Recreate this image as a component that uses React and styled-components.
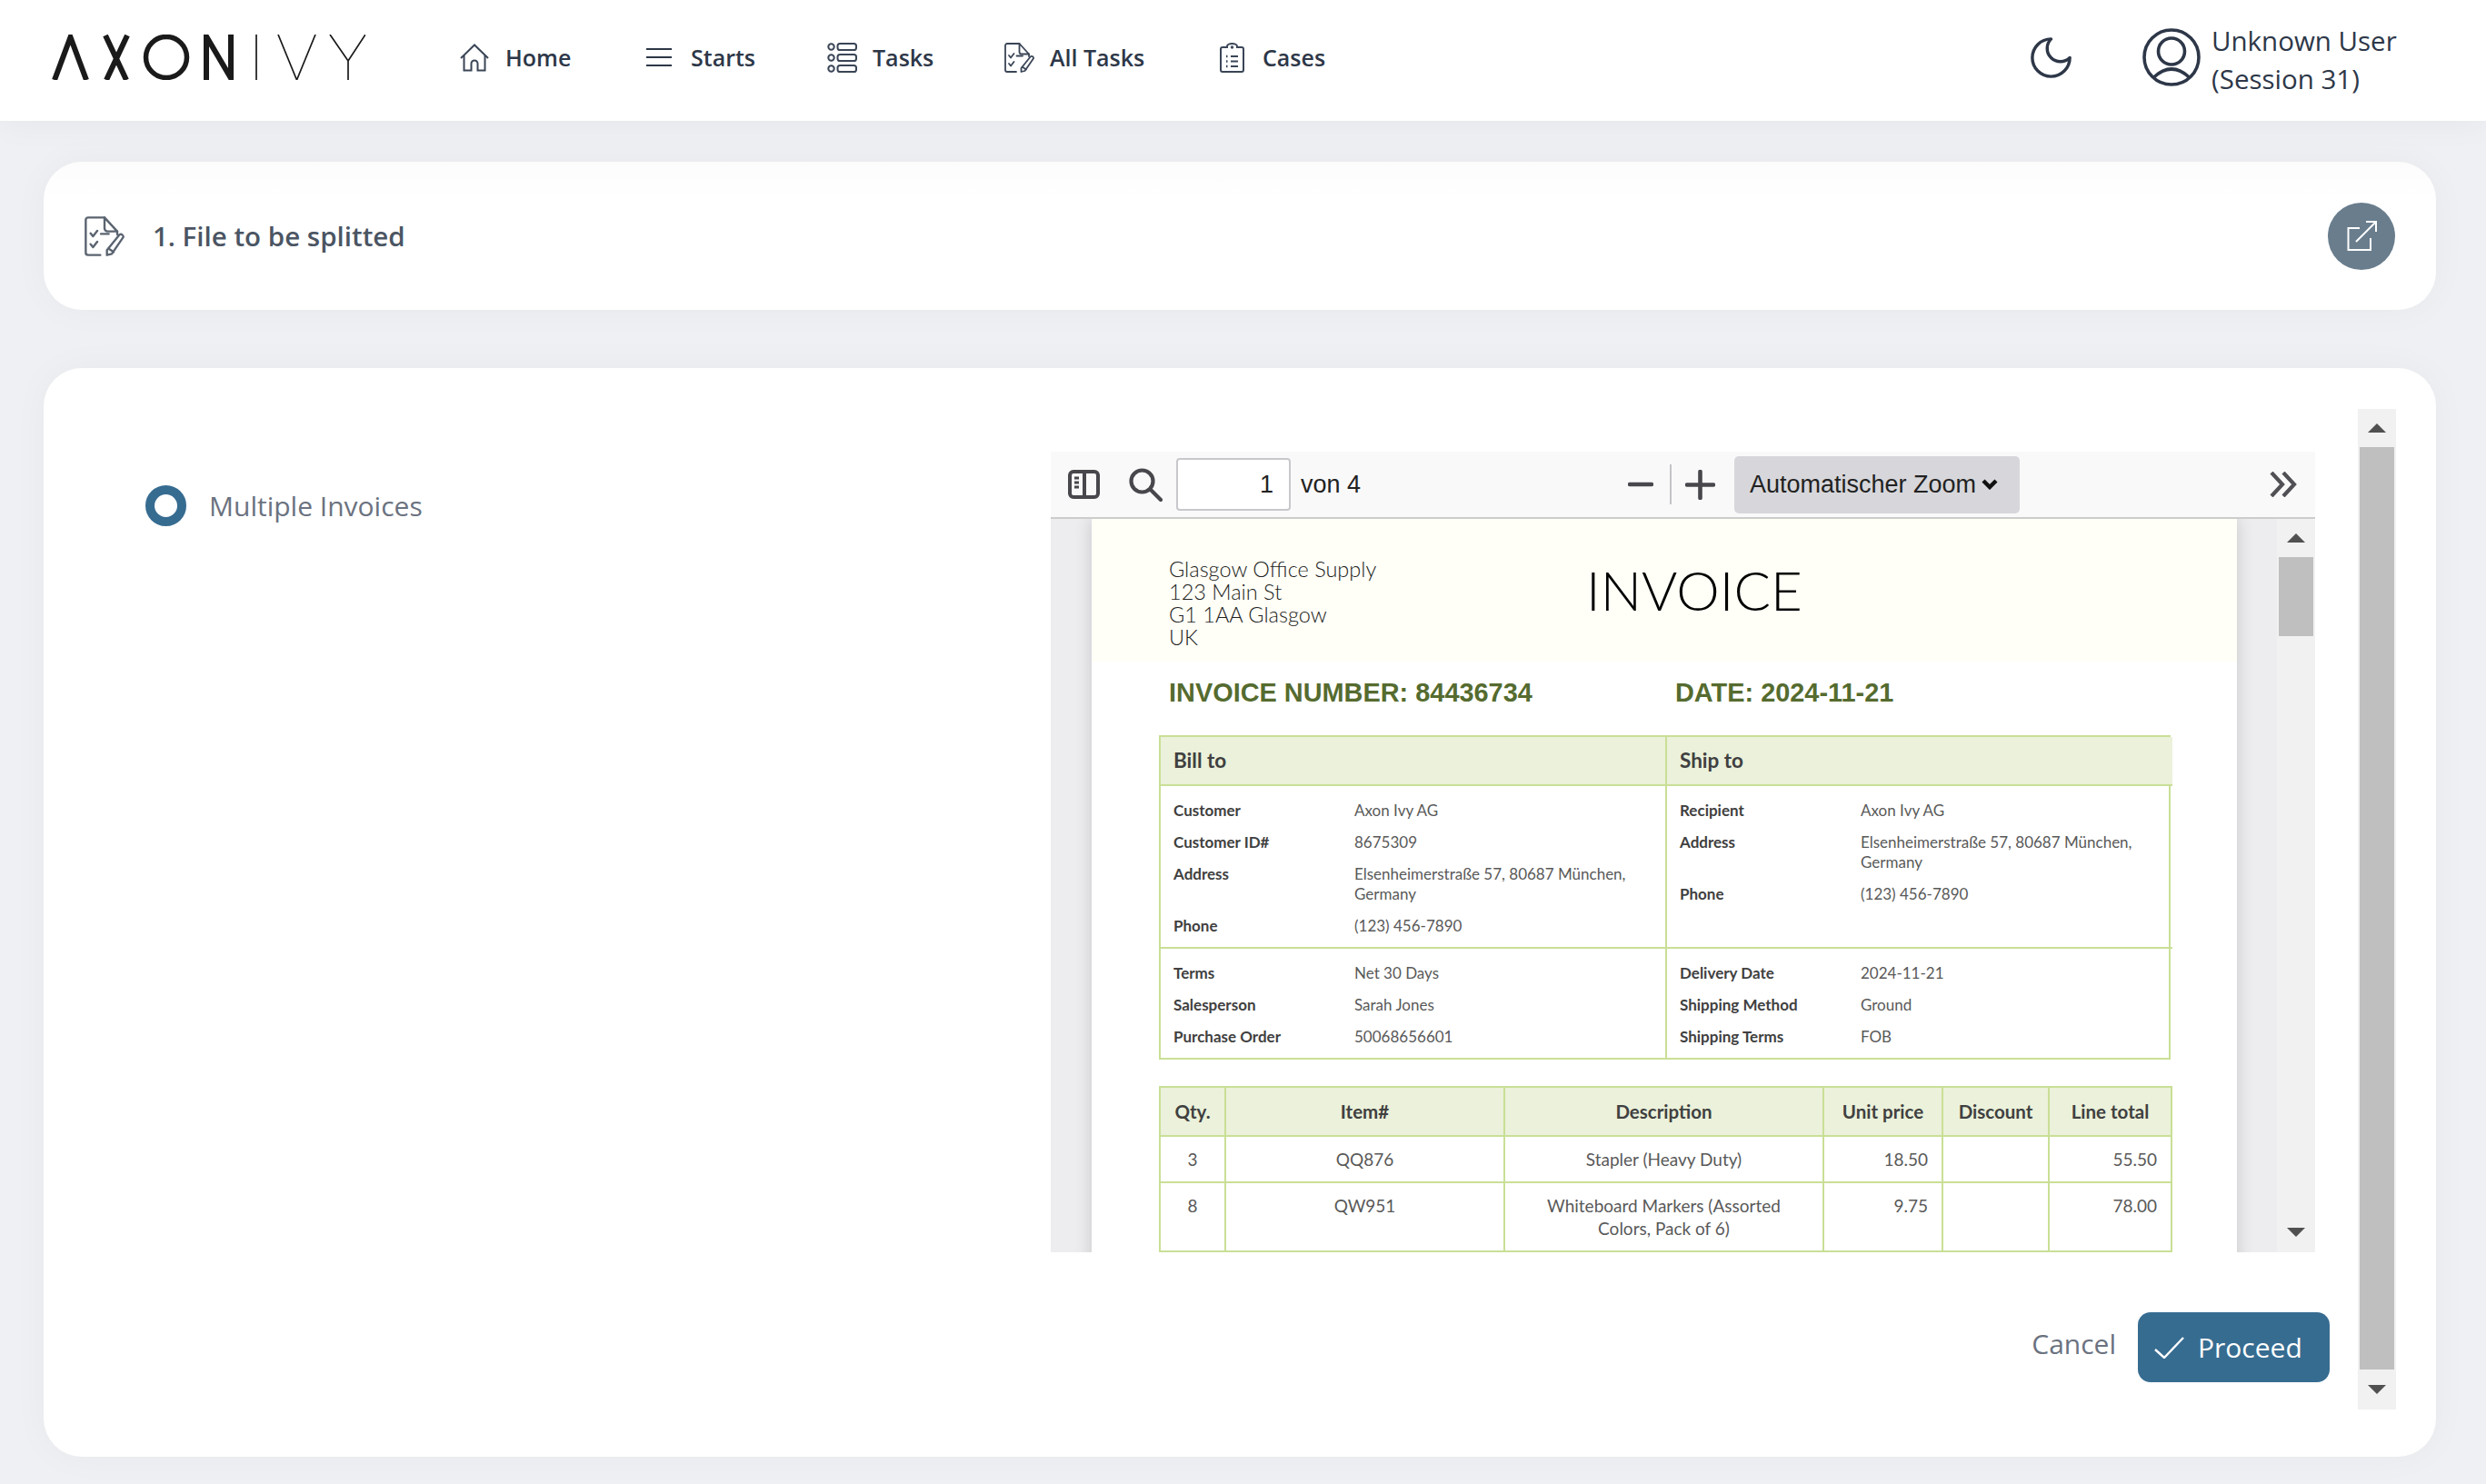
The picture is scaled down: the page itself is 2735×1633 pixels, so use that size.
import React from "react";
import styled, { createGlobalStyle } from "styled-components";

const Global = createGlobalStyle`
  html, body { margin: 0; padding: 0; background: #eff0f3; }
  body { font-family: "Open Sans", "Noto Sans", sans-serif; color: #2d3748; }
  * { box-sizing: border-box; }
`;

const Page = styled.div`
  width: 2735px;
  height: 1633px;
  overflow: hidden;
  background: #eff0f3;
`;
const Header = styled.header`
  height: 133px;
  background: #fff;
  display: flex;
  align-items: center;
  padding: 0 0 7px 57px;
  box-shadow: 0 0 38px rgba(0, 0, 0, 0.05);
  position: relative;
`;
const LogoBox = styled.svg`
  width: 345px;
  height: 50px;
  margin-right: 104px;
  flex: none;
`;
const Nav = styled.nav`
  display: flex;
  align-items: center;
`;
const NavItem = styled.a`
  display: flex;
  align-items: center;
  width: ${(p) => p.$w}px;
  font-size: 25px;
  font-weight: 600;
  color: #2d3748;
`;
const NavIcon = styled.span`
  display: flex;
  align-items: center;
  width: ${(p) => p.$w || 50}px;
  padding-left: ${(p) => p.$pad || 0}px;
  flex: none;
`;
const HeaderRight = styled.div`
  margin-left: auto;
  display: flex;
  align-items: center;
`;
const MoonWrap = styled.span`
  display: flex;
  margin-right: 73px;
`;
const UserText = styled.div`
  margin: 5px 0 0 12px;
  width: 302px;
  font-size: 29.5px;
  line-height: 42px;
  font-weight: 400;
  color: #2d3748;
`;
const Card = styled.section`
  background: #fff;
  border-radius: 42px;
  margin: 0 55px 0 48px;
  box-shadow: 0 0 42px rgba(0, 0, 0, 0.035);
`;
const TitleCard = styled(Card)`
  margin-top: 45px;
  height: 163px;
  display: flex;
  align-items: center;
  padding: 0 45px 0 45px;
  background: linear-gradient(#fcfcfc, #fff 40px);
`;
const TitleText = styled.h1`
  margin: 0 0 0 31px;
  font-size: 29.5px;
  font-weight: 600;
  color: #4b5563;
`;
const RoundBtn = styled.button`
  margin-left: auto;
  width: 74px;
  height: 74px;
  border: 0;
  border-radius: 50%;
  background: #697d8d;
  display: flex;
  align-items: center;
  justify-content: center;
  padding: 0;
`;
const MainCard = styled(Card)`
  margin-top: 64px;
  height: 1198px;
  display: flex;
  padding: 45px 44px 52px 0;
`;
const Content = styled.div`
  flex: 1;
  padding: 47px 31px 0 0;
  display: flex;
  flex-direction: column;
`;
const FormRow = styled.div`
  display: flex;
`;
const LeftCol = styled.div`
  width: 1108px;
  padding: 37px 0 0 112px;
  display: flex;
  align-items: flex-start;
  gap: 25px;
`;
const Radio = styled.span`
  width: 45px;
  height: 45px;
  border-radius: 50%;
  border: 10px solid #376c91;
  flex: none;
`;
const RadioLabel = styled.span`
  font-size: 30px;
  line-height: 45px;
  font-weight: 400;
  color: #6b7280;
`;
const Pdf = styled.div`
  width: 1391px;
  height: 881px;
  display: flex;
  flex-direction: column;
  overflow: hidden;
  background: #ededf0;
`;
const Toolbar = styled.div`
  height: 74px;
  flex: none;
  background: #f9f9fa;
  border-bottom: 2px solid #cccccc;
  display: flex;
  align-items: center;
  padding-left: 19px;
  font-family: "Liberation Sans", Arial, sans-serif;
  font-size: 27px;
  color: #222;
`;
const ToolIcon = styled.svg`
  flex: none;
  margin-left: ${(p) => p.$ml || 0}px;
`;
const PageInput = styled.div`
  width: 126px;
  height: 58px;
  margin-left: 15px;
  border: 2px solid #c8c8cc;
  border-radius: 4px;
  background: #fff;
  display: flex;
  align-items: center;
  justify-content: flex-end;
  padding-right: 17px;
`;
const PageOf = styled.span`
  margin-left: 11px;
  width: 360px;
`;
const ToolSep = styled.span`
  width: 2px;
  height: 44px;
  background: #c4c4c8;
  margin-left: 18px;
  flex: none;
`;
const ZoomSelect = styled.div`
  width: 314px;
  height: 63px;
  margin-left: 21px;
  border-radius: 5px;
  background: #d7d7db;
  display: flex;
  align-items: center;
  padding-left: 17px;
  gap: 6px;
`;
const Viewer = styled.div`
  flex: 1;
  display: flex;
  min-height: 0;
`;
const PageArea = styled.div`
  flex: 1;
  padding-left: 45px;
  overflow: hidden;
`;
const Sheet = styled.div`
  width: 1260px;
  height: 900px;
  background: #fff;
  box-shadow: 0 0 18px rgba(0, 0, 0, 0.16);
`;
const SheetHead = styled.div`
  height: 157px;
  background: #fffff7;
  display: grid;
  grid-template-columns: 459px 1fr;
  padding: 43px 0 0 85px;
`;
const Company = styled.div`
  font-family: "Lato", sans-serif;
  font-weight: 300;
  font-size: 23.5px;
  line-height: 25px;
  color: #222;
`;
const InvoiceTitle = styled.div`
  font-family: "Lato", sans-serif;
  font-weight: 300;
  font-size: 60px;
  line-height: 70px;
  color: #000;
`;
const InvoiceMeta = styled.div`
  display: grid;
  grid-template-columns: 557px 1fr;
  padding: 19px 0 0 85px;
  height: 81px;
  font-family: "Liberation Sans", Arial, sans-serif;
  font-weight: 700;
  font-size: 28.9px;
  line-height: 30px;
  color: #556b2f;
`;
const BillTable = styled.div`
  margin-left: 74px;
  width: 1113px;
  display: grid;
  grid-template-columns: 557px 556px;
  border: 2px solid #c9df96;
  font-family: "Lato", sans-serif;
  font-size: 17px;
  line-height: 22px;
  color: #595959;
`;
const BillHead = styled.div`
  height: 54px;
  background: #ebf1da;
  border-bottom: 2px solid #c9df96;
  border-right: ${(p) => (p.$last ? 0 : "2px solid #c9df96")};
  display: flex;
  align-items: center;
  padding-left: 14px;
  font-size: 22.5px;
  font-weight: 700;
  color: #404040;
`;
const BillSection = styled.div`
  height: ${(p) => p.$h}px;
  padding: ${(p) => p.$top}px 0 0 14px;
  border-bottom: ${(p) => (p.$divider ? "2px solid #c9df96" : 0)};
  border-right: ${(p) => (p.$last ? 0 : "2px solid #c9df96")};
  display: flex;
  flex-direction: column;
  gap: 13px;
`;
const BillRow = styled.div`
  display: grid;
  grid-template-columns: 199px 1fr;
  padding-right: 20px;
`;
const BillLabel = styled.span`
  font-weight: 700;
  color: #404040;
`;
const Items = styled.table`
  margin: 29px 0 0 74px;
  width: 1113px;
  table-layout: fixed;
  border-collapse: collapse;
  font-family: "Lato", sans-serif;
  font-size: 19px;
  line-height: 25px;
  color: #595959;
`;
const Th = styled.th`
  height: 54px;
  background: #ebf1da;
  border: 2px solid #c9df96;
  font-weight: 700;
  color: #404040;
  font-size: 20.5px;
  padding: 0;
`;
const Td = styled.td`
  border: 2px solid #c9df96;
  height: ${(p) => p.$h}px;
  vertical-align: top;
  text-align: ${(p) => (p.$right ? "right" : "center")};
  padding: 12px ${(p) => (p.$right ? 15 : 4)}px 0;
`;
const Track = styled.div`
  width: 42px;
  flex: none;
  background: #f1f1f1;
  display: flex;
  flex-direction: column;
`;
const ArrowBox = styled.div`
  height: ${(p) => p.$h}px;
  flex: none;
  display: flex;
  align-items: center;
  justify-content: center;
  &::after {
    content: "";
    border-left: 10px solid transparent;
    border-right: 10px solid transparent;
    ${(p) => (p.$down ? "border-top" : "border-bottom")}: 10px solid #505050;
  }
`;
const Thumb = styled.div`
  margin: 0 2px;
  background: #bfbfbf;
  height: ${(p) => (p.$h ? p.$h + "px" : "auto")};
  flex: ${(p) => (p.$h ? "none" : 1)};
`;
const TrackGap = styled.div`
  flex: 1;
`;
const Actions = styled.div`
  margin-top: 66px;
  display: flex;
  justify-content: flex-end;
  align-items: flex-start;
  gap: 24px;
`;
const CancelBtn = styled.span`
  font-size: 30px;
  line-height: 70px;
  color: #6b7280;
`;
const ProceedBtn = styled.button`
  width: 211px;
  height: 77px;
  border: 0;
  border-radius: 14px;
  background: #376c91;
  color: #fff;
  display: flex;
  align-items: center;
  padding: 0 0 0 18px;
  gap: 15px;
  font-family: "Open Sans", sans-serif;
  font-size: 30px;
`;
const PdfWrap = styled.div`
  flex: none;
`;

const Logo = () => (
  <LogoBox viewBox="0 0 345 50">
    <g fill="none" stroke="#1a1a1a" strokeWidth="6">
      <path d="M3 50 L20.5 3 L38 50" />
      <path d="M59 1 L82 50 M83 1 L60 50" />
      <ellipse cx="126" cy="25" rx="22.5" ry="22.5" strokeWidth="5.5" />
      <path d="M170 50 V2 L197 48 V0" />
    </g>
    <g fill="none" stroke="#1a1a1a" strokeWidth="1.7">
      <path d="M225 0 V50 M249 0 L269.5 50 L290 0 M306 0 L326 29 L345 0 M326 29 V50" />
    </g>
  </LogoBox>
);
const ink = "#3a4556";
const HomeIcon = () => (
  <svg width="32" height="31" viewBox="0 0 32 31" fill="none" stroke={ink} strokeWidth="2">
    <path d="M1 16 L16 1.5 L31 16" />
    <path d="M4.5 13 V29.5 H12.5 V22 a3.5 3.5 0 0 1 7 0 V29.5 H27.5 V13" />
  </svg>
);
const StartsIcon = () => (
  <svg width="28" height="22" viewBox="0 0 28 22" fill="none" stroke="#2d3748" strokeWidth="2">
    <path d="M0 2 H28 M0 11 H28 M0 20 H28" />
  </svg>
);
const TasksIcon = () => (
  <svg width="33" height="33" viewBox="0 0 33 33" fill="none" stroke={ink} strokeWidth="2">
    <circle cx="4.5" cy="4.5" r="3.2" />
    <rect x="11.5" y="1" width="20.5" height="7" rx="2.6" />
    <circle cx="4.5" cy="16.5" r="3.2" />
    <rect x="11.5" y="13" width="20.5" height="7" rx="2.6" />
    <circle cx="4.5" cy="28.5" r="3.2" />
    <rect x="11.5" y="25" width="20.5" height="7" rx="2.6" />
  </svg>
);
const DocIcon = ({ size = 33, color = ink }) => (
  <svg width={size} height={size} viewBox="0 0 33 33" fill="none" stroke={color} strokeWidth="1.8" strokeLinejoin="round" strokeLinecap="round">
    <path d="M16.5 1 H3 a2 2 0 0 0 -2 2 V30 a2 2 0 0 0 2 2 H13" />
    <path d="M16.5 1 L27 12.5 H19 a2.5 2.5 0 0 1 -2.5 -2.5 Z" />
    <path d="M27 12.5 V15" />
    <path d="M5 14 L7 16.5 L10.5 12 M5 23 L7 25.5 L10.5 21 M13.5 14.5 H20" />
    <path d="M29 15 a2.2 2.2 0 0 1 3 2.2 L22.5 31 L18.5 32 L18.5 28 Z M19.5 26.5 L24 29.5" />
  </svg>
);
const CasesIcon = () => (
  <svg width="27" height="33" viewBox="0 0 27 33" fill="none" stroke={ink} strokeWidth="2">
    <path d="M8 5 H3 a2 2 0 0 0 -2 2 V30 a2 2 0 0 0 2 2 H24 a2 2 0 0 0 2 -2 V7 a2 2 0 0 0 -2 -2 H19 V4 a5.5 3 0 0 0 -11 0 Z" />
    <path d="M12 15 H20 M12 20.5 H20 M12 26 H20" />
    <circle cx="13.5" cy="5" r="0.7" />
    <path d="M7 15 H8.5 M7 20.5 H8.5 M7 26 H8.5" strokeWidth="2.4" />
  </svg>
);
const MoonIcon = () => (
  <svg width="55" height="55" viewBox="0 0 24 24" fill="none" stroke="#2d3748" strokeWidth="1.5" strokeLinejoin="round">
    <path d="M12 3a6 6 0 0 0 9 9 9 9 0 1 1-9-9Z" />
  </svg>
);
const UserIcon = () => (
  <svg width="64" height="64" viewBox="0 0 64 64" fill="none" stroke="#2d3748" strokeWidth="3.6">
    <circle cx="32" cy="32" r="30" />
    <circle cx="32" cy="25.5" r="14.5" />
    <path d="M12.5 54 Q32 36 51.5 54" />
  </svg>
);
const ExternalIcon = () => (
  <svg width="33" height="33" viewBox="0 0 33 33" fill="none" stroke="#fff" strokeWidth="2">
    <path d="M14 8 H1.5 V32 H26 V19" />
    <path d="M10 23 L32 1 M21 1 H32 V12" />
  </svg>
);
const SidebarIcon = () => (
  <ToolIcon width="35" height="32" viewBox="0 0 35 32" fill="none" stroke="#47474c" strokeWidth="4">
    <rect x="2" y="2" width="31" height="28" rx="4" />
    <path d="M18 2 V30" />
    <path d="M7 9 H12 M7 14 H12 M7 19 H12" strokeWidth="2.8" />
  </ToolIcon>
);
const SearchIcon = () => (
  <ToolIcon $ml={32} width="37" height="37" viewBox="0 0 37 37" fill="none" stroke="#47474c" strokeWidth="4.2" strokeLinecap="round">
    <circle cx="14.5" cy="14.5" r="12" />
    <path d="M23.5 23.5 L35 35" />
  </ToolIcon>
);
const MinusIcon = () => (
  <ToolIcon width="28" height="28" viewBox="0 0 28 28" stroke="#47474c" strokeWidth="4.6" strokeLinecap="round">
    <path d="M2 14 H26" />
  </ToolIcon>
);
const PlusIcon = () => (
  <ToolIcon $ml={15} width="33" height="33" viewBox="0 0 33 33" stroke="#47474c" strokeWidth="4.6" strokeLinecap="round">
    <path d="M2 16.5 H31 M16.5 2 V31" />
  </ToolIcon>
);
const ChevronDown = () => (
  <ToolIcon width="18" height="12" viewBox="0 0 18 12" fill="none" stroke="#111" strokeWidth="4.4">
    <path d="M2 2 L9 9 L16 2" />
  </ToolIcon>
);
const DoubleChevron = () => (
  <ToolIcon $ml={275} width="30" height="28" viewBox="0 0 30 28" fill="none" stroke="#505055" strokeWidth="4.2">
    <path d="M2 1 L14 14 L2 27 M15 1 L27 14 L15 27" />
  </ToolIcon>
);
const CheckIcon = () => (
  <svg width="33" height="24" viewBox="0 0 33 24" fill="none" stroke="#fff" strokeWidth="2.4">
    <path d="M1 14 L11 23 L32 1" />
  </svg>
);

const billLeft = [
  ["Customer", "Axon Ivy AG"],
  ["Customer ID#", "8675309"],
  ["Address", <>Elsenheimerstraße 57, 80687 München,<br />Germany</>],
  ["Phone", "(123) 456-7890"],
];
const billRight = [
  ["Recipient", "Axon Ivy AG"],
  ["Address", <>Elsenheimerstraße 57, 80687 München,<br />Germany</>],
  ["Phone", "(123) 456-7890"],
];
const termsLeft = [
  ["Terms", "Net 30 Days"],
  ["Salesperson", "Sarah Jones"],
  ["Purchase Order", "50068656601"],
];
const termsRight = [
  ["Delivery Date", "2024-11-21"],
  ["Shipping Method", "Ground"],
  ["Shipping Terms", "FOB"],
];

const Rows = ({ rows }) =>
  rows.map(([k, v]) => (
    <BillRow key={k}>
      <BillLabel>{k}</BillLabel>
      <span>{v}</span>
    </BillRow>
  ));

export default function App() {
  return (
    <Page>
      <Global />
      <Header>
        <Logo />
        <Nav>
          <NavItem $w={205}><NavIcon><HomeIcon /></NavIcon>Home</NavItem>
          <NavItem $w={199}><NavIcon $w={49}><StartsIcon /></NavIcon>Starts</NavItem>
          <NavItem $w={195}><NavIcon><TasksIcon /></NavIcon>Tasks</NavItem>
          <NavItem $w={234}><NavIcon><DocIcon /></NavIcon>All Tasks</NavItem>
          <NavItem $w={130}><NavIcon $pad={3}><CasesIcon /></NavIcon>Cases</NavItem>
        </Nav>
        <HeaderRight>
          <MoonWrap><MoonIcon /></MoonWrap>
          <UserIcon />
          <UserText>Unknown User<br />(Session 31)</UserText>
        </HeaderRight>
      </Header>

      <TitleCard>
        <DocIcon size={44} color="#5b6470" />
        <TitleText>1. File to be splitted</TitleText>
        <RoundBtn><ExternalIcon /></RoundBtn>
      </TitleCard>

      <MainCard>
        <Content>
          <FormRow>
            <LeftCol>
              <Radio />
              <RadioLabel>Multiple Invoices</RadioLabel>
            </LeftCol>
            <PdfWrap>
              <Pdf>
                <Toolbar>
                  <SidebarIcon />
                  <SearchIcon />
                  <PageInput>1</PageInput>
                  <PageOf>von 4</PageOf>
                  <MinusIcon />
                  <ToolSep />
                  <PlusIcon />
                  <ZoomSelect>Automatischer Zoom<ChevronDown /></ZoomSelect>
                  <DoubleChevron />
                </Toolbar>
                <Viewer>
                  <PageArea>
                    <Sheet>
                      <SheetHead>
                        <Company>
                          Glasgow Office Supply<br />123 Main St<br />G1 1AA Glasgow<br />UK
                        </Company>
                        <InvoiceTitle>INVOICE</InvoiceTitle>
                      </SheetHead>
                      <InvoiceMeta>
                        <span>INVOICE NUMBER: 84436734</span>
                        <span>DATE: 2024-11-21</span>
                      </InvoiceMeta>
                      <BillTable>
                        <BillHead>Bill to</BillHead>
                        <BillHead $last>Ship to</BillHead>
                        <BillSection $h={179} $top={16} $divider><Rows rows={billLeft} /></BillSection>
                        <BillSection $h={179} $top={16} $divider $last><Rows rows={billRight} /></BillSection>
                        <BillSection $h={120} $top={16}><Rows rows={termsLeft} /></BillSection>
                        <BillSection $h={120} $top={16} $last><Rows rows={termsRight} /></BillSection>
                      </BillTable>
                      <Items>
                        <colgroup>
                          <col width="72" />
                          <col width="307" />
                          <col width="351" />
                          <col width="131" />
                          <col width="117" />
                          <col width="135" />
                        </colgroup>
                        <thead>
                          <tr>
                            <Th>Qty.</Th>
                            <Th>Item#</Th>
                            <Th>Description</Th>
                            <Th>Unit price</Th>
                            <Th>Discount</Th>
                            <Th>Line total</Th>
                          </tr>
                        </thead>
                        <tbody>
                          <tr>
                            <Td $h={51}>3</Td>
                            <Td $h={51}>QQ876</Td>
                            <Td $h={51}>Stapler (Heavy Duty)</Td>
                            <Td $h={51} $right>18.50</Td>
                            <Td $h={51} $right></Td>
                            <Td $h={51} $right>55.50</Td>
                          </tr>
                          <tr>
                            <Td $h={76}>8</Td>
                            <Td $h={76}>QW951</Td>
                            <Td $h={76}>Whiteboard Markers (Assorted<br />Colors, Pack of 6)</Td>
                            <Td $h={76} $right>9.75</Td>
                            <Td $h={76} $right></Td>
                            <Td $h={76} $right>78.00</Td>
                          </tr>
                        </tbody>
                      </Items>
                    </Sheet>
                  </PageArea>
                  <Track>
                    <ArrowBox $h={42} />
                    <Thumb $h={87} />
                    <TrackGap />
                    <ArrowBox $h={44} $down />
                  </Track>
                </Viewer>
              </Pdf>
            </PdfWrap>
          </FormRow>
          <Actions>
            <CancelBtn>Cancel</CancelBtn>
            <ProceedBtn><CheckIcon />Proceed</ProceedBtn>
          </Actions>
        </Content>
        <Track>
          <ArrowBox $h={42} />
          <Thumb />
          <ArrowBox $h={44} $down />
        </Track>
      </MainCard>
    </Page>
  );
}
